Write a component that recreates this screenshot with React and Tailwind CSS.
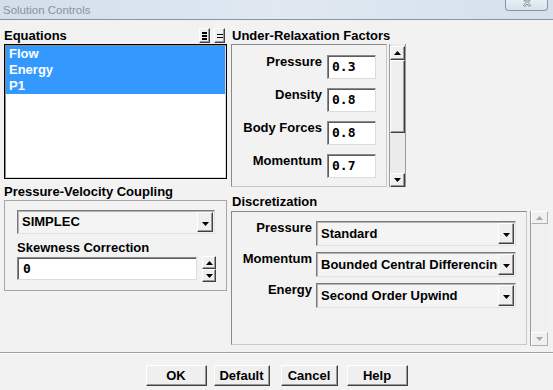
import React from "react";

const SANS = "font-['Liberation_Sans',Arial,sans-serif]";
const MONO = "font-['DejaVu_Sans_Mono','Liberation_Mono',monospace]";

function Tri({ dir = "down", color = "#000" }) {
  return (
    <svg width="7" height="4" viewBox="0 0 7 4" className="block">
      {dir === "down" ? (
        <path d="M0 0H7L3.5 4Z" fill={color} />
      ) : (
        <path d="M0 4H7L3.5 0Z" fill={color} />
      )}
    </svg>
  );
}

function Raised({ className = "", children }) {
  return (
    <div
      className={
        "bg-[#efefef] border border-t-[#ffffff] border-l-[#ffffff] border-r-[#404040] border-b-[#404040] shadow-[inset_-1px_-1px_0_#9a9a9a] flex items-center justify-center " +
        className
      }
    >
      {children}
    </div>
  );
}

function Combo({ text, className }) {
  return (
    <div
      className={
        "flex items-stretch border border-t-[#7a7a7a] border-l-[#7a7a7a] border-r-[#e2e2e2] border-b-[#e2e2e2] bg-[#f4f4f4] shadow-[inset_1px_1px_0_#b4b4b4] " +
        className
      }
    >
      <div className="flex-1 min-w-0 overflow-hidden whitespace-nowrap pl-[4px] flex items-center text-[13px] leading-[16px] font-bold text-black">
        {text}
      </div>
      <div className="py-[1px] pr-[1px] flex">
        <Raised className="w-[16px] pt-[3px]">
          <Tri />
        </Raised>
      </div>
    </div>
  );
}

function Field({ value, className }) {
  return (
    <div
      className={
        "bg-white border border-t-[#8a8a8a] border-l-[#8a8a8a] border-r-[#dcdcdc] border-b-[#dcdcdc] shadow-[inset_1px_1px_0_#5e5e5e] flex items-center text-[13px] leading-[16px] font-bold text-black " +
        MONO +
        " " +
        className
      }
    >
      {value}
    </div>
  );
}

function URRow({ label, value }) {
  return (
    <div className="h-[24px] flex items-start justify-end">
      <span className="-mt-[1px] mr-[5px] text-[13px] leading-[16px] font-bold text-black whitespace-nowrap">
        {label}
      </span>
      <Field value={value} className="w-[49px] h-[24px] pl-[4px]" />
    </div>
  );
}

function DRow({ label, text }) {
  return (
    <div className="h-[25px] flex items-start">
      <span className="w-[80px] -mt-[1px] text-right text-[13px] leading-[16px] font-bold text-black whitespace-nowrap">
        {label}
      </span>
      <Combo text={text} className="ml-[4px] w-[200px] h-[25px]" />
    </div>
  );
}

export default function App() {
  return (
    <div
      className={
        "w-[553px] h-[390px] overflow-hidden bg-[#f2f2f2] flex flex-col " + SANS
      }
    >
      {/* Title bar */}
      <div className="h-[20px] shrink-0 bg-gradient-to-r from-[#d2deea] via-[#e0e9f2] to-[#d5e0eb] border-b border-[#8494a5] flex items-start justify-between">
        <span className="ml-[3px] mt-[2px] text-[11.5px] leading-[17px] text-[#8b9199]">
          Solution Controls
        </span>
        <div className="mr-[5px] w-[43px] h-[11px] border border-t-0 border-[#8796a6] rounded-b-[4px] bg-gradient-to-b from-[#e8eef5] to-[#d8e2ec] flex justify-center overflow-hidden">
          <svg width="10" height="8" viewBox="0 0 10 8" className="block -mt-[1px]">
            <path d="M1 0L4 3.5L1 7M9 0L6 3.5L9 7M2.5 0L5 2.5L7.5 0M2.5 8L5 5L7.5 8" stroke="#7b8896" strokeWidth="1" fill="none" />
          </svg>
        </div>
      </div>

      {/* Body */}
      <div className="h-[332px] shrink-0 flex pl-[4px] pt-[8px]">
        {/* Left column */}
        <div className="w-[223px] flex flex-col">
          <div className="h-[16px] flex items-start justify-between">
            <span className="text-[13px] leading-[16px] font-bold text-black">Equations</span>
            <div className="flex gap-[4px] mr-[2px]">
              <Raised className="w-[11px] h-[15px]">
                <svg width="5" height="8" viewBox="0 0 5 8" className="block">
                  <rect x="0" y="0" width="5" height="2" fill="#000" />
                  <rect x="0" y="3" width="5" height="2" fill="#000" />
                  <rect x="0" y="6" width="5" height="2" fill="#000" />
                </svg>
              </Raised>
              <Raised className="w-[11px] h-[15px]">
                <svg width="6" height="4" viewBox="0 0 6 4" className="block">
                  <rect x="0" y="0" width="6" height="1" fill="#000" />
                  <rect x="0" y="3" width="6" height="1" fill="#000" />
                </svg>
              </Raised>
            </div>
          </div>
          <div className="h-[135px] border border-black">
            <div className="h-full bg-white border border-t-[#8a8a8a] border-l-[#8a8a8a] border-r-[#d8d8d8] border-b-[#d8d8d8]">
              {["Flow", "Energy", "P1"].map((t) => (
                <div
                  key={t}
                  className="h-[16px] bg-[#3399ff] pl-[3px] text-[13px] leading-[16px] font-bold text-white"
                >
                  {t}
                </div>
              ))}
            </div>
          </div>
          <div className="mt-[5px] h-[16px] text-[13px] leading-[16px] font-bold text-black">
            Pressure-Velocity Coupling
          </div>
          <div className="h-[91px] border border-[#a6a6a6] pl-[12px] pt-[9px] flex flex-col">
            <Combo text="SIMPLEC" className="w-[198px] h-[24px]" />
            <div className="mt-[6px] h-[16px] text-[13px] leading-[16px] font-bold text-black">
              Skewness Correction
            </div>
            <div className="mt-[1px] flex items-start">
              <Field value="0" className="w-[180px] h-[23px] pl-[5px]" />
              <div className="ml-[5px] -mt-[1px] flex flex-col">
                <Raised className="w-[14px] h-[13px]">
                  <Tri dir="up" />
                </Raised>
                <Raised className="w-[14px] h-[13px]">
                  <Tri />
                </Raised>
              </div>
            </div>
          </div>
        </div>

        {/* Right column */}
        <div className="ml-[4px] w-[318px] flex flex-col">
          <div className="h-[16px] pl-[1px] text-[13px] leading-[16px] font-bold text-black">
            Under-Relaxation Factors
          </div>
          <div className="flex items-start">
            <div className="w-[156px] h-[143px] border border-t-[#8a8a8a] border-l-[#8a8a8a] border-r-[#c8c8c8] border-b-[#c8c8c8] pt-[10px] pr-[10px] flex flex-col gap-[9px]">
              <URRow label="Pressure" value="0.3" />
              <URRow label="Density" value="0.8" />
              <URRow label="Body Forces" value="0.8" />
              <URRow label="Momentum" value="0.7" />
            </div>
            <div className="ml-[2px] w-[17px] h-[143px] flex flex-col bg-[#ebebeb] border-l border-r border-[#9a9a9a] pt-[2px]">
              <Raised className="h-[14px] shrink-0">
                <Tri dir="up" />
              </Raised>
              <Raised className="h-[73px] shrink-0" />
              <div className="flex-1" />
              <Raised className="h-[14px] shrink-0">
                <Tri />
              </Raised>
            </div>
          </div>
          <div className="mt-[7px] h-[16px] pl-[1px] text-[13px] leading-[16px] font-bold text-black">
            Discretization
          </div>
          <div className="mt-[1px] flex items-start">
            <div className="w-[296px] h-[134px] border border-t-[#8a8a8a] border-l-[#8a8a8a] border-r-[#c8c8c8] border-b-[#c8c8c8] pt-[9px] flex flex-col gap-[6px]">
              <DRow label="Pressure" text="Standard" />
              <DRow label="Momentum" text="Bounded Central Differencing" />
              <DRow label="Energy" text="Second Order Upwind" />
            </div>
            <div className="ml-[3px] w-[18px] h-[135px] flex flex-col bg-[#f0f0f0] border-l border-[#9a9a9a]">
              <div className="h-[13px] shrink-0 bg-[#f0f0f0] border border-t-white border-l-white border-r-[#b0b0b0] border-b-[#b0b0b0] flex items-center justify-center">
                <Tri dir="up" color="#a8a8a8" />
              </div>
              <div className="flex-1" />
              <div className="h-[14px] shrink-0 bg-[#f0f0f0] border border-t-white border-l-white border-r-[#b0b0b0] border-b-[#b0b0b0] flex items-center justify-center">
                <Tri color="#a8a8a8" />
              </div>
            </div>
          </div>
        </div>
      </div>

      {/* Separator */}
      <div className="h-[2px] shrink-0 border-t border-[#a0a0a0] bg-white" />

      {/* Buttons */}
      <div className="pt-[11px] flex justify-center">
        <Raised className="w-[61px] h-[21px] text-[13px] font-bold text-black">OK</Raised>
        <Raised className="ml-[7px] w-[56px] h-[21px] text-[13px] font-bold text-black">Default</Raised>
        <Raised className="ml-[11px] w-[57px] h-[21px] text-[13px] font-bold text-black">Cancel</Raised>
        <Raised className="ml-[9px] w-[61px] h-[21px] text-[13px] font-bold text-black">Help</Raised>
      </div>
    </div>
  );
}
